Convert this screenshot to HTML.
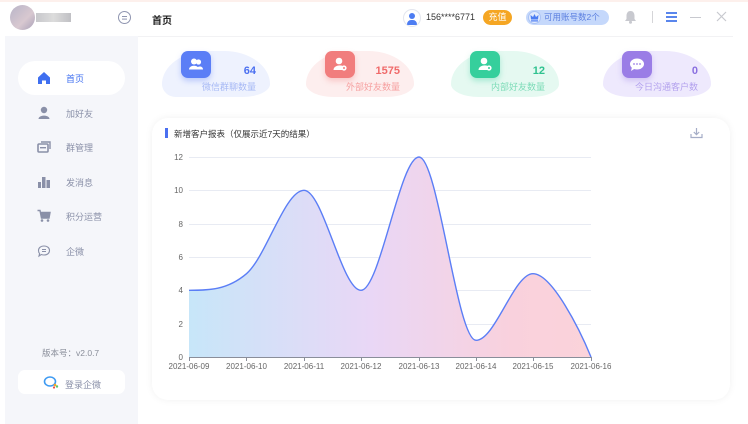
<!DOCTYPE html>
<html><head><meta charset="utf-8"><style>
*{margin:0;padding:0;box-sizing:border-box}
body{width:748px;height:424px;overflow:hidden;background:#fff;font-family:"Liberation Sans","Noto Sans CJK SC",sans-serif;position:relative}
.abs{position:absolute}
.side{left:5px;top:36px;width:133px;height:388px;background:#f5f6fa}
.mi{position:absolute;left:0;width:133px;height:30px;font-size:9px;color:#8a90a8}
.mi span{position:absolute;left:61px;top:9px}
.mi svg{position:absolute;left:32px;top:8px}
.blob{position:absolute;border-radius:40px 40px 36px 36px / 30px 30px 20px 20px}
.ico{position:absolute;width:30px;height:27px;border-radius:7px}
.num{position:absolute;font-size:11px;font-weight:bold;text-align:right}
.lbl{position:absolute;font-size:9px;text-align:right;white-space:nowrap}
</style></head><body>
<div class="abs" style="left:0;top:0;width:748px;height:2px;background:#fdf0ec"></div>
<div class="abs side"></div>
<!-- avatar -->
<div class="abs" style="left:10px;top:5px;width:25px;height:25px;border-radius:50%;background:linear-gradient(135deg,#b8b4c8,#d8c8d0 60%,#a8a0b8)"></div>
<div class="abs" style="left:36px;top:13px;width:35px;height:9px;background:linear-gradient(90deg,#c8c8cc,#dcdcdc,#c0c0c4)"></div>
<div class="abs" style="left:118px;top:11px;width:13px;height:13px;border:1.3px solid #8f95b0;border-radius:50%"><div style="position:absolute;left:2.5px;top:3.5px;width:5.5px;height:1.2px;background:#8f95b0;box-shadow:0 2.6px 0 #8f95b0"></div></div>
<div class="abs" style="left:152px;top:12px;font-size:10px;color:#222;font-weight:bold">首页</div>
<div class="abs" style="left:138px;top:36px;width:595px;height:1px;background:#f2f2f4"></div>
<!-- header right -->
<div class="abs" style="left:403px;top:9px;width:18px;height:18px;border-radius:50%;border:1px solid #e3e6ee;background:#fff"><div style="position:absolute;left:5px;top:3px;width:6px;height:6px;border-radius:50%;background:#4d7df2"></div><div style="position:absolute;left:3px;top:9.5px;width:10px;height:5px;border-radius:5px 5px 1px 1px;background:#4d7df2"></div></div>
<div class="abs" style="left:426px;top:12px;font-size:9px;color:#333">156****6771</div>
<div class="abs" style="left:483px;top:10px;width:29px;height:15px;border-radius:8px;background:#f5a623;color:#fff;font-size:9px;text-align:center;line-height:15px">充值</div>
<div class="abs" style="left:526px;top:10px;width:83px;height:15px;border-radius:8px;background:#c5d8fb;color:#5c7fe0;font-size:8.5px;line-height:15px;padding-left:18px">可用账号数2个</div>
<div class="abs" style="left:528px;top:11px;width:13px;height:13px;border-radius:50%;background:#e2ebfd;border:1px solid #a9c2f5"><svg width="11" height="11" viewBox="0 0 11 11" style="position:absolute;left:0;top:0"><path d="M2 7.5 L1.5 3 L4 5 L5.5 2 L7 5 L9.5 3 L9 7.5Z" fill="#4d7df2"/><rect x="2" y="8.3" width="7" height="1.2" fill="#4d7df2"/></svg></div>
<svg class="abs" style="left:624px;top:10px" width="13" height="14" viewBox="0 0 13 14"><path d="M6.5 1 C3.5 1 2.5 3.5 2.5 6 L2.5 9 L1 11 L12 11 L10.5 9 L10.5 6 C10.5 3.5 9.5 1 6.5 1Z" fill="#c8c9cf"/><circle cx="6.5" cy="12.3" r="1.5" fill="#c8c9cf"/></svg>
<div class="abs" style="left:652px;top:11px;width:1px;height:12px;background:#d5d5d8"></div>
<div class="abs" style="left:666px;top:12px;width:11px;height:1.5px;background:#5a86ec;box-shadow:0 4px 0 #5a86ec,0 8px 0 #5a86ec"></div>
<div class="abs" style="left:690px;top:17px;width:11px;height:1.2px;background:#c8c9cf"></div>
<svg class="abs" style="left:716px;top:11px" width="11" height="11"><path d="M1 1 L10 10 M10 1 L1 10" stroke="#c8c9cf" stroke-width="1.2"/></svg>
<!-- menu -->
<div class="abs" style="left:18px;top:61px;width:107px;height:34px;border-radius:17px;background:#fff"></div>
<div class="mi" style="top:63px;left:5px"><svg width="14" height="14" viewBox="0 0 14 14"><path d="M7 1 L13 6.5 L13 13 L9 13 L9 9.5 L5 9.5 L5 13 L1 13 L1 6.5Z" fill="#3f6ff0"/></svg><span style="color:#3f6ff0">首页</span></div>
<div class="mi" style="top:98px;left:5px"><svg width="14" height="14" viewBox="0 0 14 14"><circle cx="7" cy="4" r="3.2" fill="#8a90a8"/><path d="M1.5 13 C1.5 8.5 12.5 8.5 12.5 13Z" fill="#8a90a8"/></svg><span>加好友</span></div>
<div class="mi" style="top:132px;left:5px"><svg width="14" height="14" viewBox="0 0 14 14"><rect x="1" y="4" width="10" height="8" rx="1" fill="none" stroke="#8a90a8" stroke-width="1.6"/><path d="M4 2 L13 2 L13 9" fill="none" stroke="#8a90a8" stroke-width="1.4"/><rect x="3" y="7" width="6" height="1.4" fill="#8a90a8"/></svg><span>群管理</span></div>
<div class="mi" style="top:167px;left:5px"><svg width="14" height="14" viewBox="0 0 14 14"><rect x="1" y="7" width="3" height="6" fill="#8a90a8"/><rect x="5" y="2" width="3.5" height="11" fill="#8a90a8"/><rect x="9.5" y="5" width="3.5" height="8" fill="#8a90a8"/></svg><span>发消息</span></div>
<div class="mi" style="top:201px;left:5px"><svg width="14" height="14" viewBox="0 0 14 14"><path d="M0.5 1.5 L3 1.5 L4.5 9 L12 9 L13 3.5 L3.5 3.5" fill="none" stroke="#8a90a8" stroke-width="1.4"/><path d="M3.5 3.5 L13 3.5 L12 9 L4.5 9Z" fill="#8a90a8"/><circle cx="5" cy="11.5" r="1.3" fill="#8a90a8"/><circle cx="11" cy="11.5" r="1.3" fill="#8a90a8"/></svg><span>积分运营</span></div>
<div class="mi" style="top:236px;left:5px"><svg width="14" height="14" viewBox="0 0 14 14"><path d="M7 2 C10.5 2 12.5 4 12.5 6.5 C12.5 9 10.5 11 7 11 C6 11 5 10.8 4.3 10.5 L2 12 L2.6 9.6 C1.8 8.8 1.5 7.7 1.5 6.5 C1.5 4 3.5 2 7 2Z" fill="none" stroke="#8a90a8" stroke-width="1.1"/><path d="M5 5.5 H9 M5 7.5 H9" stroke="#8a90a8" stroke-width="1"/></svg><span>企微</span></div>
<div class="abs" style="left:42px;top:347px;font-size:8.5px;color:#8a8e9a">版本号：v2.0.7</div>
<div class="abs" style="left:18px;top:370px;width:107px;height:24px;border-radius:7px;background:#fff"></div>
<svg class="abs" style="left:43px;top:375px" width="16" height="14" viewBox="0 0 16 14"><ellipse cx="7" cy="6.5" rx="5.5" ry="4.5" fill="none" stroke="#3d9af2" stroke-width="1.6"/><circle cx="12" cy="10" r="1.3" fill="#f5a623"/><circle cx="14" cy="11.5" r="1.2" fill="#5cc36a"/><circle cx="11" cy="12.5" r="1.1" fill="#e94f4f"/></svg>
<div class="abs" style="left:65px;top:378px;font-size:9px;color:#8a90a8">登录企微</div>
<!-- stat cards -->
<div class="blob" style="left:162px;top:51px;width:108px;height:46px;background:#eef2fe;border-radius:50px 50px 30px 30px / 36px 36px 14px 14px"></div>
<div class="blob" style="left:162px;top:70px;width:60px;height:27px;background:#eef2fe;border-radius:30px 0 14px 14px/14px 0 13px 13px"></div>
<div class="ico" style="left:181px;top:51px;background:#5b7ef6;box-shadow:0 3px 6px rgba(91,126,246,.35)"><svg width="30" height="27"><circle cx="13" cy="10.5" r="3" fill="#fff"/><circle cx="17.5" cy="11" r="2.6" fill="#fff"/><path d="M8 18.5 C8 13.5 18 13.5 18 18.5Z M15 18.5 C15 15 22 14 22 18.5Z" fill="#fff"/></svg></div>
<div class="num" style="left:200px;top:65px;width:56px;color:#4a6ff0">64</div>
<div class="lbl" style="left:180px;top:80px;width:76px;color:#a7b9f5">微信群聊数量</div>

<div class="blob" style="left:306px;top:51px;width:108px;height:46px;background:#fdeeee;border-radius:50px 50px 30px 30px / 36px 36px 14px 14px"></div>
<div class="ico" style="left:325px;top:51px;background:#f17d7d;box-shadow:0 3px 6px rgba(241,125,125,.35)"><svg width="30" height="27"><circle cx="14" cy="10" r="3.3" fill="#fff"/><path d="M8.5 19 C8.5 14 17 13.5 18 15.5 L18 19Z" fill="#fff"/><circle cx="19" cy="17" r="2.6" fill="#fff"/><circle cx="19" cy="17" r="1" fill="#f17d7d"/></svg></div>
<div class="num" style="left:340px;top:65px;width:60px;color:#f06a6a">1575</div>
<div class="lbl" style="left:320px;top:80px;width:80px;color:#f6a0a0">外部好友数量</div>

<div class="blob" style="left:451px;top:51px;width:108px;height:46px;background:#e5f9f1;border-radius:50px 50px 30px 30px / 36px 36px 14px 14px"></div>
<div class="ico" style="left:470px;top:51px;background:#35cf9c;box-shadow:0 3px 6px rgba(53,207,156,.35)"><svg width="30" height="27"><circle cx="14" cy="10" r="3.3" fill="#fff"/><path d="M8.5 19 C8.5 14 17 13.5 18 15.5 L18 19Z" fill="#fff"/><circle cx="19" cy="17" r="2.6" fill="#fff"/><circle cx="19" cy="17" r="1" fill="#35cf9c"/></svg></div>
<div class="num" style="left:485px;top:65px;width:60px;color:#2fc28f">12</div>
<div class="lbl" style="left:465px;top:80px;width:80px;color:#7ddcb8">内部好友数量</div>

<div class="blob" style="left:603px;top:51px;width:108px;height:46px;background:#eee9fd;border-radius:50px 50px 30px 30px / 36px 36px 14px 14px"></div>
<div class="ico" style="left:622px;top:51px;background:#9a7de6;box-shadow:0 3px 6px rgba(154,125,230,.35)"><svg width="30" height="27"><ellipse cx="15" cy="13" rx="7" ry="5.5" fill="#fff"/><path d="M10 16 L9 20 L13 17.5Z" fill="#fff"/><circle cx="12" cy="13" r="0.9" fill="#9a7de6"/><circle cx="15" cy="13" r="0.9" fill="#9a7de6"/><circle cx="18" cy="13" r="0.9" fill="#9a7de6"/></svg></div>
<div class="num" style="left:638px;top:65px;width:60px;color:#8a6fe0">0</div>
<div class="lbl" style="left:608px;top:80px;width:90px;color:#b3a1ee">今日沟通客户数</div>
<!-- chart card -->
<div class="abs" style="left:152px;top:118px;width:578px;height:282px;border-radius:16px;background:#fff;box-shadow:0 0 8px rgba(0,0,0,.06)"></div>
<div class="abs" style="left:165px;top:128px;width:2.5px;height:10px;background:#4a6ff0"></div>
<div class="abs" style="left:174px;top:128px;font-size:8.5px;color:#333">新增客户报表（仅展示近7天的结果）</div>
<svg class="abs" style="left:690px;top:127px" width="13" height="12"><path d="M6.5 1 V7.5 M3.8 5 L6.5 7.7 L9.2 5 M1 7 V10.5 H12 V7" fill="none" stroke="#a5adc7" stroke-width="1.2"/></svg>
<svg class="abs" style="left:0;top:0" width="748" height="424">
<defs><linearGradient id="g" x1="0" x2="1" y1="0" y2="0"><stop offset="0" stop-color="#c7e6f9"/><stop offset="0.45" stop-color="#e9d7f6"/><stop offset="0.8" stop-color="#f9d1dd"/><stop offset="1" stop-color="#fbd3da"/></linearGradient></defs>
<g stroke="#e8ebf3" stroke-width="1">
<line x1="189" x2="591" y1="157.5" y2="157.5"/><line x1="189" x2="591" y1="190.5" y2="190.5"/><line x1="189" x2="591" y1="224.5" y2="224.5"/><line x1="189" x2="591" y1="257.5" y2="257.5"/><line x1="189" x2="591" y1="290.5" y2="290.5"/><line x1="189" x2="591" y1="324.5" y2="324.5"/></g>
<path d="M189 290.3 C208 290.3 227 290.4 246.5 273.7 C266 257 285 190.3 304 190.3 C323 190.3 342 290.3 361 290.3 C380 290.3 400 157 419 157 C438 157 457 340.3 476 340.3 C495 340.3 514 273.7 533 273.7 C552 273.7 580 330 591 357 L189 357Z" fill="url(#g)"/>
<path d="M189 290.3 C208 290.3 227 290.4 246.5 273.7 C266 257 285 190.3 304 190.3 C323 190.3 342 290.3 361 290.3 C380 290.3 400 157 419 157 C438 157 457 340.3 476 340.3 C495 340.3 514 273.7 533 273.7 C552 273.7 580 330 591 357" fill="none" stroke="#5b7ef6" stroke-width="1.4"/>
<line x1="189" x2="591" y1="357.5" y2="357.5" stroke="#8a8e9a"/>
<g stroke="#8a8e9a"><line x1="189.5" x2="189.5" y1="357" y2="361"/><line x1="246.5" x2="246.5" y1="357" y2="361"/><line x1="304.5" x2="304.5" y1="357" y2="361"/><line x1="361.5" x2="361.5" y1="357" y2="361"/><line x1="419.5" x2="419.5" y1="357" y2="361"/><line x1="476.5" x2="476.5" y1="357" y2="361"/><line x1="533.5" x2="533.5" y1="357" y2="361"/><line x1="591.5" x2="591.5" y1="357" y2="361"/></g>
<g font-family="Liberation Sans, sans-serif" font-size="8" fill="#666" text-anchor="end">
<text x="183" y="160">12</text><text x="183" y="193">10</text><text x="183" y="227">8</text><text x="183" y="260">6</text><text x="183" y="293">4</text><text x="183" y="327">2</text><text x="183" y="360">0</text></g>
<g font-family="Liberation Sans, sans-serif" font-size="8" fill="#666" text-anchor="middle">
<text x="189" y="369">2021-06-09</text><text x="246.5" y="369">2021-06-10</text><text x="304" y="369">2021-06-11</text><text x="361" y="369">2021-06-12</text><text x="419" y="369">2021-06-13</text><text x="476" y="369">2021-06-14</text><text x="533" y="369">2021-06-15</text><text x="591" y="369">2021-06-16</text></g>
</svg>
</body></html>
